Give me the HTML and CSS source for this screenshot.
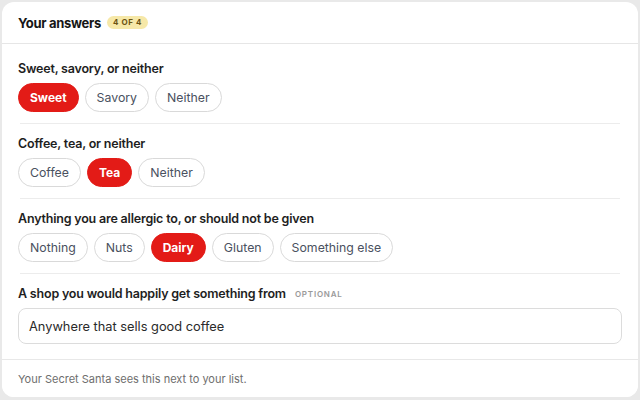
FILE: index.html
```html
<!DOCTYPE html>
<html lang="en">
<head>
<meta charset="utf-8">
<title>Your answers</title>
<link rel="stylesheet" href="styles.css">
</head>
<body>
<div class="card">
  <header class="card-head">
    <h1 class="title">Your answers</h1>
    <span class="badge">4 OF 4</span>
  </header>
  <div class="card-body">
    <section class="question">
      <h2 class="q-label">Sweet, savory, or neither</h2>
      <div class="chips">
        <span class="chip selected">Sweet</span>
        <span class="chip">Savory</span>
        <span class="chip">Neither</span>
      </div>
    </section>
    <section class="question">
      <h2 class="q-label">Coffee, tea, or neither</h2>
      <div class="chips">
        <span class="chip">Coffee</span>
        <span class="chip selected">Tea</span>
        <span class="chip">Neither</span>
      </div>
    </section>
    <section class="question">
      <h2 class="q-label">Anything you are allergic to, or should not be given</h2>
      <div class="chips">
        <span class="chip">Nothing</span>
        <span class="chip">Nuts</span>
        <span class="chip selected">Dairy</span>
        <span class="chip">Gluten</span>
        <span class="chip">Something else</span>
      </div>
    </section>
    <section class="question last">
      <h2 class="q-label">A shop you would happily get something from <span class="optional">OPTIONAL</span></h2>
      <div class="input">Anywhere that sells good coffee</div>
    </section>
  </div>
  <footer class="card-foot">Your Secret Santa sees this next to your list.</footer>
</div>
</body>
</html>
```
FILE: styles.css
```css
html, body {
  margin: 0;
  padding: 0;
}
body {
  background: #e9e9e9;
  font-family: "Inter", "Noto Sans", sans-serif;
  color: #1c1c1c;
  width: 640px;
  height: 400px;
  overflow: hidden;
}
.card {
  margin: 2px 2px 0 2px;
  height: 395px;
  box-sizing: border-box;
  background: #fff;
  border-radius: 12px;
  display: flex;
  flex-direction: column;
  overflow: hidden;
}
.card-head {
  height: 41px;
  flex: none;
  display: flex;
  align-items: center;
  gap: 6px;
  padding: 0 16px;
  border-bottom: 1px solid #e6e6e6;
}
.title {
  margin: 0;
  font-size: 13px;
  font-weight: 700;
  letter-spacing: -0.3px;
  color: #161616;
}
.badge {
  background: #f6e8a8;
  color: #6b5312;
  font-size: 8px;
  font-weight: 700;
  letter-spacing: 0.6px;
  padding: 2px 6px;
  border-radius: 7px;
  line-height: 9px;
}
.card-body {
  flex: 1;
  padding: 5px 16px 0;
}
.question {
  padding: 12px 0 12px;
  background: linear-gradient(#ececec, #ececec) center bottom / calc(100% - 4px) 1px no-repeat;
}
.question.last {
  background: none;
  padding-bottom: 0;
}
.q-label {
  margin: 0 0 6px;
  font-size: 12.5px;
  line-height: 16px;
  font-weight: 600;
  letter-spacing: -0.2px;
  color: #1e1e1e;
  display: flex;
  align-items: center;
  gap: 9px;
}
.optional {
  font-size: 8px;
  font-weight: 600;
  letter-spacing: 0.8px;
  color: #9a9a9a;
}
.chips {
  display: flex;
  gap: 6px;
}
.chip {
  height: 29px;
  box-sizing: border-box;
  display: inline-flex;
  align-items: center;
  padding: 0 11px;
  border: 1px solid #d9d9d9;
  border-radius: 15px;
  font-size: 12.3px;
  font-weight: 400;
  color: #4a5160;
  background: #fff;
}
.chip.selected {
  background: #e31b17;
  border-color: #e31b17;
  color: #fff;
  font-weight: 700;
  font-size: 12px;
}
.input {
  height: 36px;
  box-sizing: border-box;
  border: 1px solid #dcdcdc;
  border-radius: 8px;
  display: flex;
  align-items: center;
  padding: 0 10px;
  font-size: 12.8px;
  color: #2a2a2a;
}
.card-foot {
  height: 38px;
  flex: none;
  box-sizing: border-box;
  border-top: 1px solid #e8e8e8;
  display: flex;
  align-items: center;
  padding: 0 16px;
  font-size: 11px;
  color: #6e6e6e;
  background: #fff;
}
```
